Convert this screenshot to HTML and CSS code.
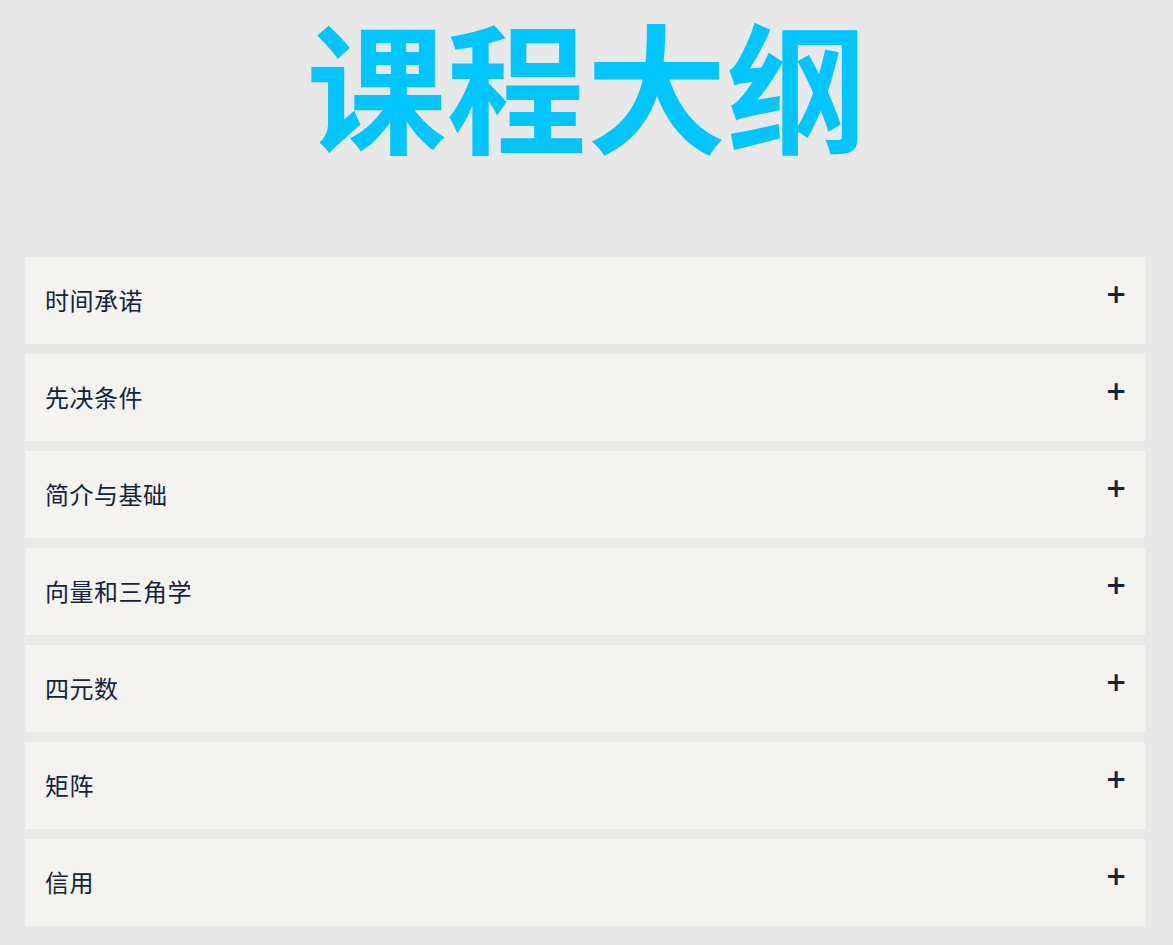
FILE: index.html
```html
<!DOCTYPE html>
<html>
<head>
    <title>课程大纲</title>
    <meta name="viewport" content="width=device-width, initial-scale=1"/>
    <link rel="stylesheet" href="styles.css">
</head>
<body>
<h1 class="title">课程大纲</h1>

<div class="syllabus">
    <div class="item"><span class="item-name">时间承诺</span><span class="plus">+</span></div>
    <div class="item"><span class="item-name">先决条件</span><span class="plus">+</span></div>
    <div class="item"><span class="item-name">简介与基础</span><span class="plus">+</span></div>
    <div class="item"><span class="item-name">向量和三角学</span><span class="plus">+</span></div>
    <div class="item"><span class="item-name">四元数</span><span class="plus">+</span></div>
    <div class="item"><span class="item-name">矩阵</span><span class="plus">+</span></div>
    <div class="item"><span class="item-name">信用</span><span class="plus">+</span></div>
</div>
</body>
</html>
```

FILE: styles.css
```css
body {
    margin: 0;
    background-color: #e8e8e8;
    font-family: "Noto Sans CJK SC", "Noto Sans", sans-serif;
}

.title {
    margin: 0;
    padding-top: 2px;
    height: 235px;
    box-sizing: border-box;
    text-align: center;
    font-size: 140px;
    line-height: 160px;
    font-weight: bold;
    color: #00c5ff;
}

.syllabus {
    display: flex;
    flex-direction: column;
    gap: 10px;
    padding: 22px 28px 0 25px;
}

.item {
    display: flex;
    justify-content: space-between;
    align-items: center;
    height: 87px;
    padding: 0 20px 0 20px;
    background-color: #f4f3f0;
    color: #13233a;
    font-size: 24px;
}

.item-name {
    margin-bottom: 3px;
    letter-spacing: 0.5px;
}

.plus {
    font-family: "DejaVu Sans", sans-serif;
    font-weight: bold;
    font-size: 26px;
    margin: 0 -2px 14px 0;
}
```
